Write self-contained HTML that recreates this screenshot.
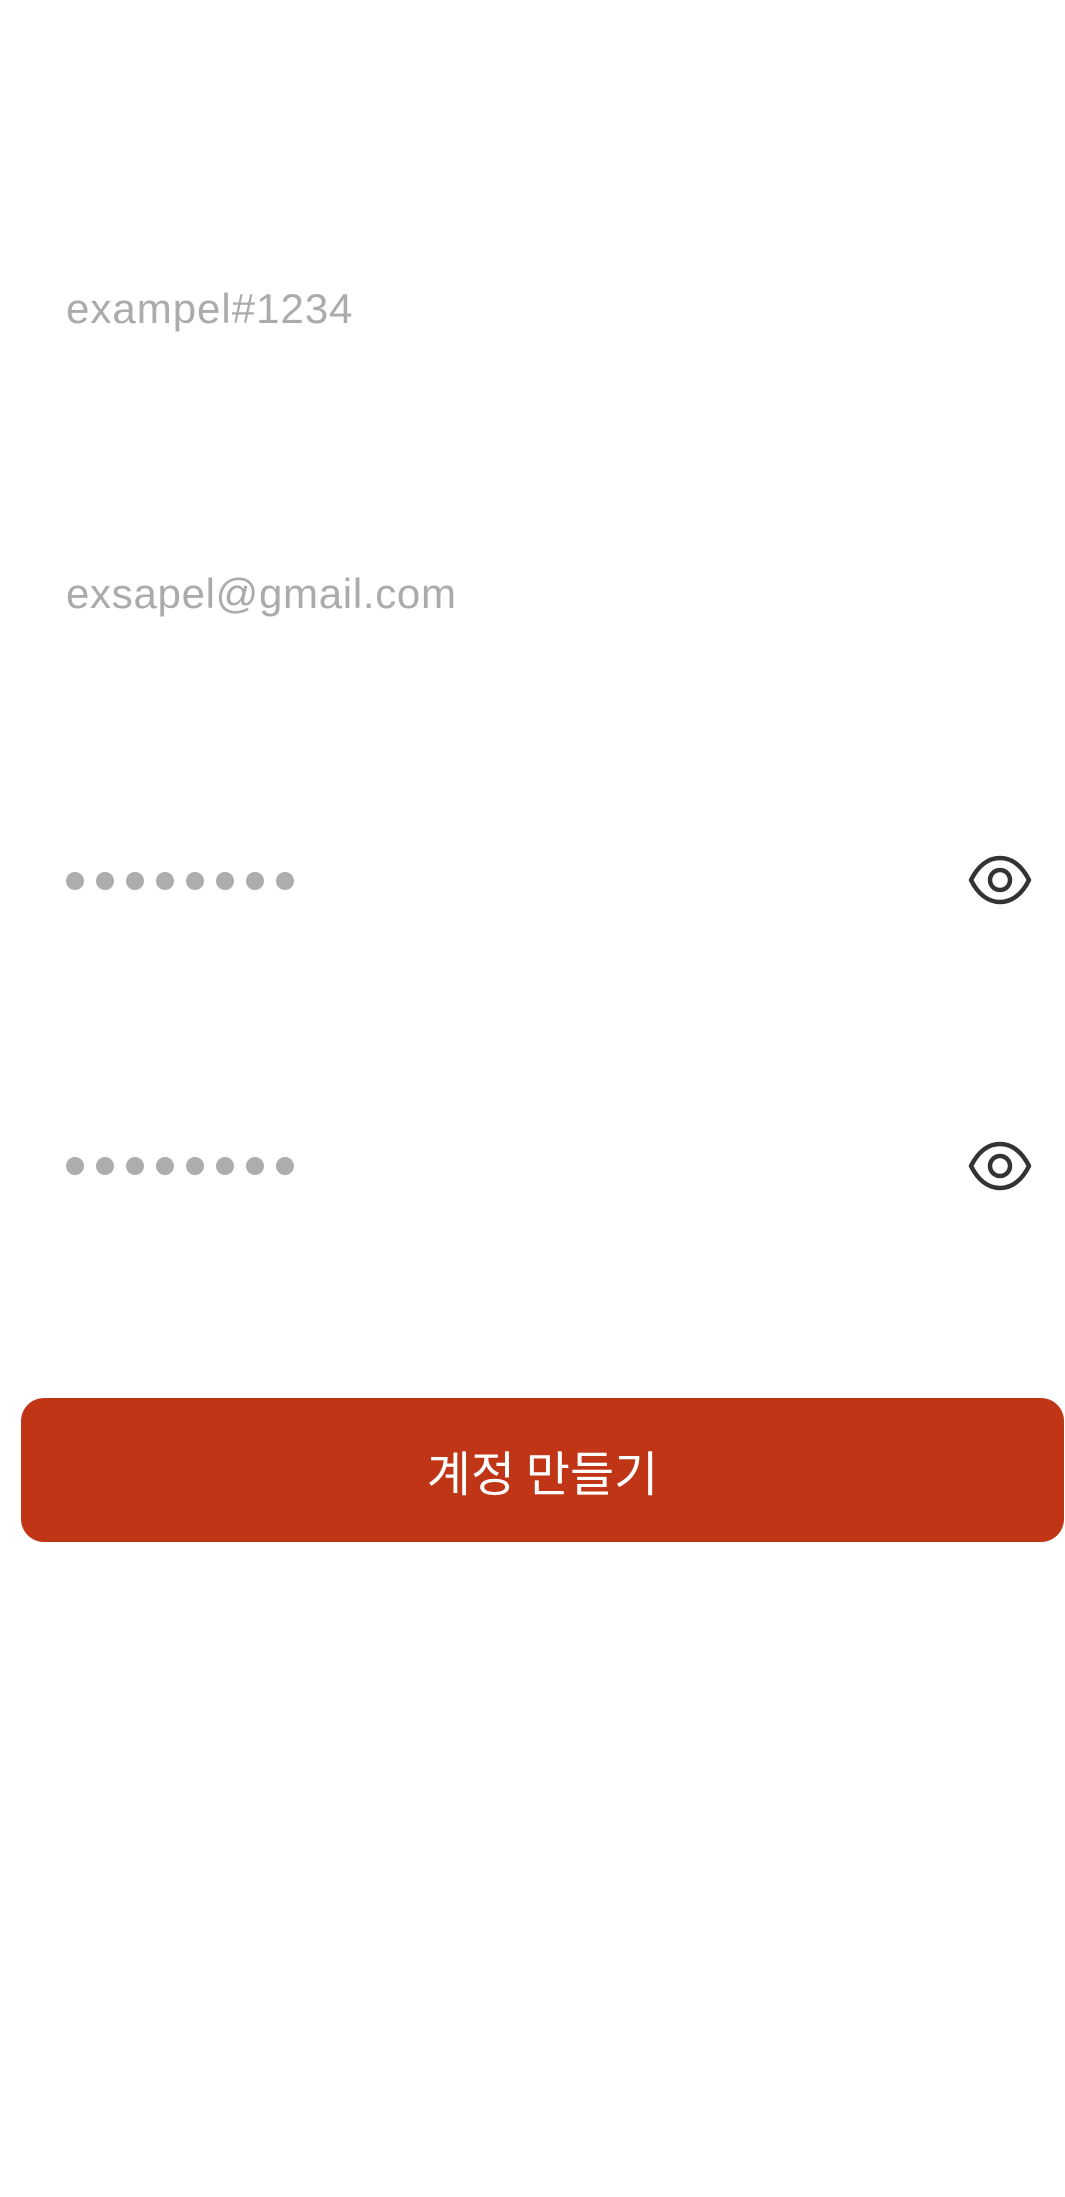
<!DOCTYPE html>
<html><head><meta charset="utf-8">
<style>
html,body{margin:0;padding:0;background:#fff;}
body{width:1065px;height:2197px;position:relative;overflow:hidden;font-family:"Liberation Sans","Noto Sans CJK KR",sans-serif;}
.t{position:absolute;left:66px;font-size:42px;line-height:42px;color:#ababab;white-space:nowrap;}
.dots{position:absolute;left:66px;height:18px;}
.dots span{position:absolute;top:0;width:18px;height:18px;border-radius:50%;background:#adadad;}
.eye{position:absolute;left:968px;width:64px;height:52px;}
.btn{position:absolute;left:21px;top:1398px;width:1043px;height:144px;background:#c03515;border-radius:23px;color:#fff;font-family:"Noto Sans CJK KR","Liberation Sans",sans-serif;font-size:48px;line-height:144px;text-align:center;}
</style></head><body>
<div class="t" style="top:288px;letter-spacing:1px;">exampel#1234</div>
<div class="t" style="top:573px;letter-spacing:0.7px;">exsapel@gmail.com</div>

<div class="dots" style="top:872px;">
<span style="left:0"></span><span style="left:30px"></span><span style="left:60px"></span><span style="left:90px"></span><span style="left:120px"></span><span style="left:150px"></span><span style="left:180px"></span><span style="left:210px"></span>
</div>
<svg class="eye" style="top:854px" viewBox="0 0 64 52"><path d="M3 26C10 12 20 4 32 4C44 4 54 12 61 26C54 40 44 48 32 48C20 48 10 40 3 26Z" fill="none" stroke="#333" stroke-width="4.5" stroke-linejoin="round"/><circle cx="32" cy="26" r="10" fill="none" stroke="#333" stroke-width="4.5"/></svg>

<div class="dots" style="top:1157px;">
<span style="left:0"></span><span style="left:30px"></span><span style="left:60px"></span><span style="left:90px"></span><span style="left:120px"></span><span style="left:150px"></span><span style="left:180px"></span><span style="left:210px"></span>
</div>
<svg class="eye" style="top:1140px" viewBox="0 0 64 52"><path d="M3 26C10 12 20 4 32 4C44 4 54 12 61 26C54 40 44 48 32 48C20 48 10 40 3 26Z" fill="none" stroke="#333" stroke-width="4.5" stroke-linejoin="round"/><circle cx="32" cy="26" r="10" fill="none" stroke="#333" stroke-width="4.5"/></svg>

<div class="btn">계정 만들기</div>
</body></html>
